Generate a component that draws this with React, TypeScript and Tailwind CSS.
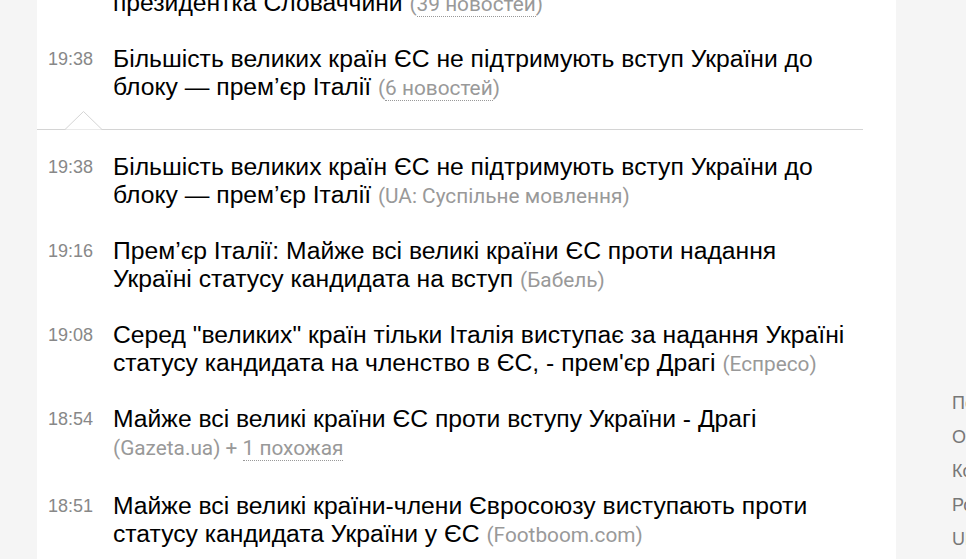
import React from "react";

type Item = {
  time: string;
  lines: string[];
  source?: string;
  more?: string;
  breakBeforeSource?: boolean;
};

const items: Item[] = [
  {
    time: "19:38",
    lines: ["Україна має отримати статус кандидата —", "президентка Словаччини"],
    more: "39 новостей",
  },
  {
    time: "19:38",
    lines: ["Більшість великих країн ЄС не підтримують вступ України до", "блоку — прем’єр Італії"],
    more: "6 новостей",
  },
];

const related: Item[] = [
  {
    time: "19:38",
    lines: ["Більшість великих країн ЄС не підтримують вступ України до", "блоку — прем’єр Італії"],
    source: "UA: Суспільне мовлення",
  },
  {
    time: "19:16",
    lines: ["Прем’єр Італії: Майже всі великі країни ЄС проти надання", "Україні статусу кандидата на вступ"],
    source: "Бабель",
  },
  {
    time: "19:08",
    lines: [
      "Серед \"великих\" країн тільки Італія виступає за надання Україні",
      "статусу кандидата на членство в ЄС, - прем'єр Драгі",
    ],
    source: "Еспресо",
  },
  {
    time: "18:54",
    lines: ["Майже всі великі країни ЄС проти вступу України - Драгі"],
    source: "Gazeta.ua",
    more: "1 похожая",
    breakBeforeSource: true,
  },
  {
    time: "18:51",
    lines: ["Майже всі великі країни-члени Євросоюзу виступають проти", "статусу кандидата України у ЄС"],
    source: "Footboom.com",
  },
];

function Row({ item }: { item: Item }) {
  return (
    <div className={`flex ${item.breakBeforeSource ? "pb-[31px]" : "pb-7"}`}>
      <div className="w-[76px] shrink-0 pl-[11px] font-['Liberation_Sans',Arial,sans-serif] text-[18px] leading-7 text-[#888]">
        {item.time}
      </div>
      <div className="whitespace-nowrap font-['Liberation_Sans',Arial,sans-serif] text-[24.7px] leading-7 text-black">
        {item.lines.map((l, i) => (
          <React.Fragment key={i}>
            {i > 0 && <br />}
            {l}
          </React.Fragment>
        ))}
        {item.breakBeforeSource ? <br /> : " "}
        <span className="font-['Roboto',sans-serif] text-[20.8px] leading-none text-[#999]">
          {item.source && <>({item.source})</>}
          {item.source && item.more && " + "}
          {item.more && (
            <>
              {!item.source && "("}
              <span className="border-b border-dotted border-[#999]">{item.more}</span>
              {!item.source && ")"}
            </>
          )}
        </span>
      </div>
    </div>
  );
}

export default function App() {
  const side = ["Політика", "Общество", "Коронавирус", "Россия", "Ukraine"];
  return (
    <div className="flex h-[559px] w-[966px] overflow-hidden bg-[#f5f5f5]">
      <div className="w-[37px] shrink-0" />
      <main className="w-[859px] shrink-0 bg-white pr-[33px]">
        <div className="-mt-[39px]">
          {items.map((it, i) => (
            <Row key={i} item={it} />
          ))}
          <div className="relative h-px bg-[#d4d4d4]">
            <svg
              className="absolute left-[28px] top-[-18px]"
              width="38"
              height="19"
              viewBox="0 0 38 19"
            >
              <polygon points="0,18.5 18.5,0.5 37,18.5" fill="#fff" />
              <polyline points="0,18.5 18.5,0.5 37,18.5" fill="none" stroke="#d4d4d4" strokeWidth="1" />
            </svg>
          </div>
          <div className="pt-[23px]">
            {related.map((it, i) => (
              <Row key={i} item={it} />
            ))}
          </div>
        </div>
      </main>
      <aside className="flex-1 pl-[56px] pt-[386px] font-['Liberation_Sans',Arial,sans-serif] text-[18px] leading-[34px] text-[#777]">
        {side.map((s) => (
          <div key={s} className="whitespace-nowrap">
            {s}
          </div>
        ))}
      </aside>
    </div>
  );
}
